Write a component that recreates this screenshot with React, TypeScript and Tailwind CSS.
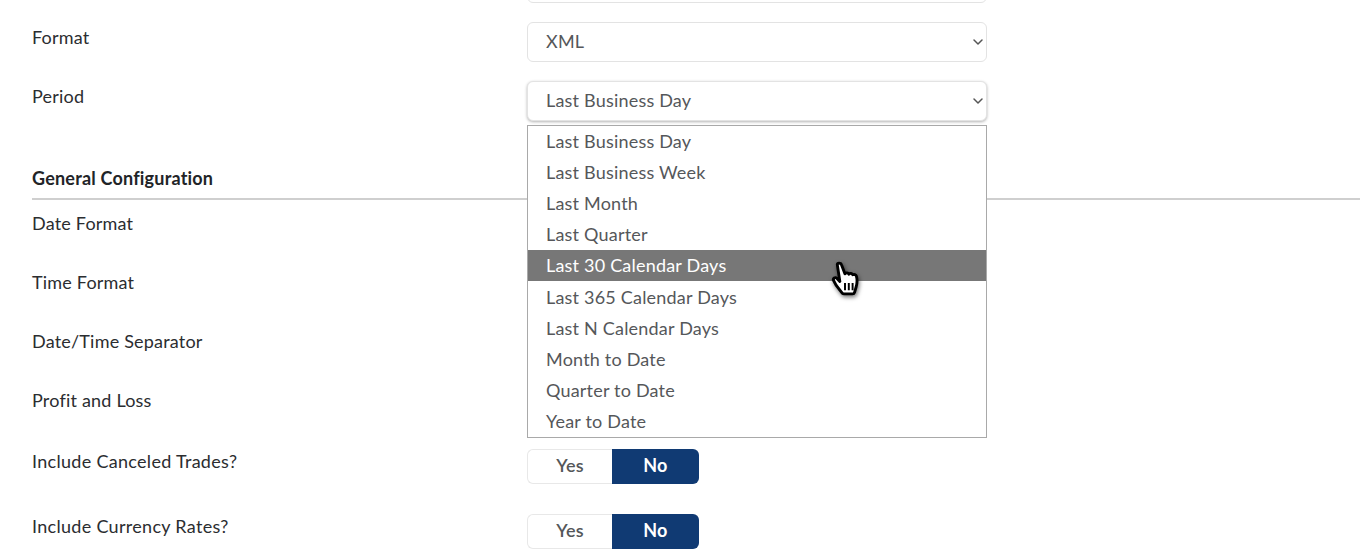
import { ChevronDown } from "lucide-react";

const FONT = "font-['Lato','Open_Sans',sans-serif] tracking-[0.2px]";

const PERIODS = [
  "Last Business Day",
  "Last Business Week",
  "Last Month",
  "Last Quarter",
  "Last 30 Calendar Days",
  "Last 365 Calendar Days",
  "Last N Calendar Days",
  "Month to Date",
  "Quarter to Date",
  "Year to Date",
];

function Select({ value, focused }: { value?: string; focused?: boolean }) {
  return (
    <div
      className={`flex h-10 w-[460px] items-center justify-between rounded-md border border-[#e3e3e3] bg-white pl-[18px] text-[18px] text-[#55575a] ${
        focused ? "shadow-[0_1px_3px_rgba(0,0,0,0.3)]" : ""
      }`}
    >
      <span className="pb-[2px]">{value}</span>
      <ChevronDown className="h-4 w-4 text-[#555]" strokeWidth={2.25} />
    </div>
  );
}

function Row({ label, value, focused }: { label: string; value?: string; focused?: boolean }) {
  return (
    <div className="flex h-[59px]">
      <div className="w-[495px] pt-1 text-[18px] leading-[22px] text-[#2b2d30]">{label}</div>
      <Select value={value} focused={focused} />
    </div>
  );
}

function Toggle() {
  return (
    <div className="flex h-[35px] w-[172px] text-[18px] font-bold">
      <div className="flex w-[85px] items-center justify-center rounded-l-md border border-r-0 border-[#e8e8e8] bg-white pb-[2px] font-semibold text-[#55575a]">
        Yes
      </div>
      <div className="flex w-[87px] items-center justify-center rounded-r-md bg-[#103a73] pb-[2px] text-white">No</div>
    </div>
  );
}

function ToggleRow({ label }: { label: string }) {
  return (
    <div className="flex h-[65px]">
      <div className="w-[495px] text-[18px] leading-[24px] tracking-[0.3px] text-[#2b2d30]">{label}</div>
      <Toggle />
    </div>
  );
}

function HandCursor() {
  return (
    <svg
      viewBox="0 0 27 36"
      className="pointer-events-none absolute left-[830px] top-[261px] h-[37px] w-[30px] drop-shadow-[1px_2px_2px_rgba(0,0,0,0.55)]"
    >
      <path
        d="M6 3.5c0-1.7 3.3-2 4 0l3.4 9c1-1.3 3.2-1.2 3.9.3 1-1.1 3.2-.9 3.8.6 1.2-.7 3.1-.2 3.5 1.3.9 3.4.6 7.6-.3 10.6l-1.5 5.2c-.3 1-1 1.5-2 1.5h-8.4c-.9 0-1.6-.4-2-1.2L4.8 23.5 2.4 19c-1-2 1.5-3.700 3.100-2.200l3 3.200z"
        fill="#fff"
        stroke="#000"
        strokeWidth="2.8"
        strokeLinejoin="round"
      />
      <path d="M13.500 21.500v7M17.200 21.500v7M20.900 21.500v7" stroke="#000" strokeWidth="1.900" fill="none" />
    </svg>
  );
}

export default function App() {
  return (
    <div className={`relative h-[560px] w-[1360px] overflow-hidden bg-white ${FONT}`}>
      <div className="-mt-[37px] pl-8">
        <Row label="" />
        <Row label="Format" value="XML" />
        <Row label="Period" value="Last Business Day" focused />
        <div className="flex h-[60px] items-end border-b-2 border-[#cfcfcf] pb-[9px] text-[18px] font-bold leading-[22px] text-[#222427]">
          General Configuration
        </div>
        <div className="h-[8px]" />
        <Row label="Date Format" />
        <Row label="Time Format" />
        <Row label="Date/Time Separator" />
        <Row label="Profit and Loss" />
        <div className="h-[5px]" />
        <ToggleRow label="Include Canceled Trades?" />
        <ToggleRow label="Include Currency Rates?" />
      </div>

      <ul className="absolute left-[527px] top-[125px] w-[460px] border border-[#a9a9a9] bg-white text-[18px] text-[#55575a]">
        {PERIODS.map((p) => (
          <li
            key={p}
            className={`flex h-[31.1px] items-center pl-[18px] ${
              p === "Last 30 Calendar Days" ? "bg-[#777777] text-white" : ""
            }`}
          >
            {p}
          </li>
        ))}
      </ul>

      <HandCursor />
    </div>
  );
}
